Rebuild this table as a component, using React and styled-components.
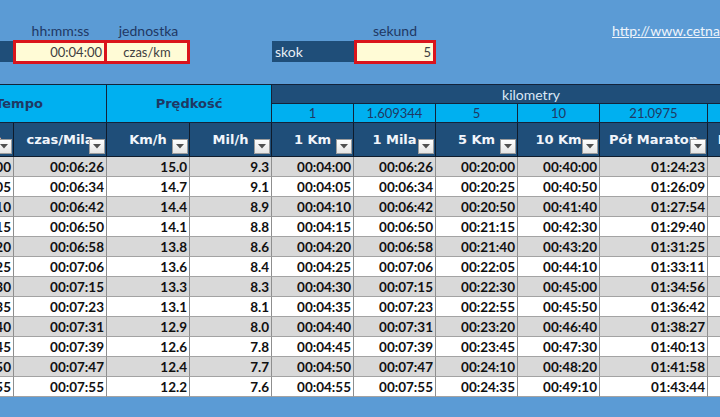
import React from "react";
import styled, { createGlobalStyle } from "styled-components";

const GlobalStyle = createGlobalStyle`
  html, body {
    margin: 0;
    padding: 0;
    background: #5b9bd5;
    overflow: hidden;
  }
  body {
    width: 720px;
    height: 417px;
    font-family: Lato, "Liberation Sans", sans-serif;
  }
`;

const COLS = "82px 93px 83px 82px 82px 82px 82px 82px 108px 82px";
const MILE = 1.609344;

const Sheet = styled.div`
  margin-left: -68px;
  width: 858px;
`;

const TopPanel = styled.div`
  display: grid;
  grid-template-columns: ${COLS};
  grid-template-rows: 19px 24px;
  height: 84px;
  padding-top: 21px;
  box-sizing: border-box;
`;

const Label = styled.div`
  grid-column: ${(p) => p.$col};
  grid-row: 1;
  display: flex;
  align-items: center;
  justify-content: center;
  font-size: 14px;
  color: #1f3864;
`;

const Link = styled.a`
  grid-column: 9;
  grid-row: 1;
  padding-left: 12px;
  font-size: 14px;
  line-height: 19px;
  color: #eef4fb;
  text-decoration: underline;
  white-space: nowrap;
`;

const InputBox = styled.div`
  grid-column: ${(p) => p.$col};
  grid-row: 2;
  display: flex;
  align-items: center;
  justify-content: ${(p) => (p.$center ? "center" : "flex-end")};
  padding: 0 2px;
  background: #fffbd6;
  border: 3px solid #da141c;
  ${(p) => p.$joined && "border-left: none;"}
  ${(p) => p.$wide && "margin-left: -1px;"}
  font-size: 13px;
  color: #404040;
`;

const DarkLabel = styled.div`
  grid-column: ${(p) => p.$col};
  grid-row: 2;
  margin: 1px 0 2px;
  display: flex;
  align-items: center;
  padding-left: 3px;
  background: #1f4e79;
  color: #e8eef6;
  font-size: 14px;
`;

const Table = styled.div`
  display: grid;
  grid-template-columns: ${COLS};
  grid-template-rows: 19px 19px 34px repeat(12, 20px);
  border-top: 1px solid #13233a;
`;

const TitleCell = styled.div`
  grid-column: ${(p) => p.$col};
  grid-row: 1 / span 2;
  display: flex;
  align-items: center;
  justify-content: center;
  background: #00b0f0;
  color: #1f3864;
  font-family: "DejaVu Sans", Verdana, sans-serif;
  font-weight: bold;
  font-size: 13px;
  border-right: 1px solid #13233a;
  border-bottom: 1px solid #13233a;
`;

const GroupCell = styled.div`
  grid-column: 5 / span 6;
  grid-row: 1;
  display: flex;
  align-items: center;
  justify-content: center;
  background: #1f4e79;
  color: #dbe8f6;
  font-size: 14px;
  border-bottom: 1px solid #13233a;
`;

const DistCell = styled.div`
  grid-row: 2;
  display: flex;
  align-items: center;
  justify-content: center;
  background: #00b0f0;
  color: #1f3864;
  font-size: 13px;
  border-right: 1px solid #13233a;
  border-bottom: 1px solid #13233a;
`;

const HeadCell = styled.div`
  position: relative;
  grid-row: 3;
  display: flex;
  align-items: center;
  justify-content: center;
  overflow: hidden;
  white-space: nowrap;
  background: #1f4e79;
  color: #f1f5fb;
  font-family: "DejaVu Sans", Verdana, sans-serif;
  font-weight: bold;
  font-size: 13px;
  border-right: 1px solid #0e1b2b;
  border-bottom: 1px solid #0e1b2b;
`;

const FilterButton = styled.span`
  position: absolute;
  right: 1px;
  bottom: 2px;
  width: 16px;
  height: 15px;
  box-sizing: border-box;
  display: flex;
  align-items: center;
  justify-content: center;
  background: linear-gradient(#ffffff, #e4e4e4);
  border: 1px solid #9c9c9c;
`;

const DataCell = styled.div`
  display: flex;
  align-items: center;
  justify-content: flex-end;
  padding-right: 2px;
  background: ${(p) => (p.$shade ? "#d9d9d9" : "#ffffff")};
  color: #111111;
  font-weight: bold;
  font-size: 13.5px;
  border-right: 1px solid #8f8f8f;
  border-bottom: 1px solid #a3a3a3;
`;

const fmt = (value) => {
  const s = Math.round(value);
  const parts = [Math.floor(s / 3600), Math.floor((s % 3600) / 60), s % 60];
  return parts.map((v) => String(v).padStart(2, "0")).join(":");
};

const headers = [
  "czas/km",
  "czas/Mila",
  "Km/h",
  "Mil/h",
  "1 Km",
  "1 Mila",
  "5 Km",
  "10 Km",
  "Pół Maraton",
  "Maraton",
];

const distances = ["1", "1.609344", "5", "10", "21.0975", "42.195"];

const rows = Array.from({ length: 12 }, (_, i) => {
  const pace = 240 + i * 5;
  const kmh = 3600 / pace;
  return [
    fmt(pace),
    fmt(pace * MILE),
    kmh.toFixed(1),
    (kmh / MILE).toFixed(1),
    fmt(pace),
    fmt(pace * MILE),
    fmt(pace * 5),
    fmt(pace * 10),
    fmt(pace * 21.0975),
    fmt(pace * 42.195),
  ];
});

const Arrow = () => (
  <svg width="8" height="5" viewBox="0 0 8 5">
    <polygon points="0,0 8,0 4,4.5" fill="#505050" />
  </svg>
);

const App = () => (
  <>
    <GlobalStyle />
    <Sheet>
      <TopPanel>
        <Label $col={2}>hh:mm:ss</Label>
        <Label $col={3}>jednostka</Label>
        <Label $col={6}>sekund</Label>
        <Link href="#">http://www.cetnar.net</Link>

        <DarkLabel $col={1} />
        <InputBox $col={2} $wide>00:04:00</InputBox>
        <InputBox $col={3} $center $joined>
          czas/km
        </InputBox>
        <DarkLabel $col={5}>skok</DarkLabel>
        <InputBox $col={6}>5</InputBox>
      </TopPanel>

      <Table>
        <TitleCell $col="1 / span 2">Tempo</TitleCell>
        <TitleCell $col="3 / span 2">Prędkość</TitleCell>
        <GroupCell>kilometry</GroupCell>
        {distances.map((d) => (
          <DistCell key={d}>{d}</DistCell>
        ))}
        {headers.map((h) => (
          <HeadCell key={h}>
            {h}
            <FilterButton>
              <Arrow />
            </FilterButton>
          </HeadCell>
        ))}
        {rows.map((row, r) =>
          row.map((value, c) => (
            <DataCell key={`${r}-${c}`} $shade={r % 2 === 0}>
              {value}
            </DataCell>
          ))
        )}
      </Table>
    </Sheet>
  </>
);

export default App;
